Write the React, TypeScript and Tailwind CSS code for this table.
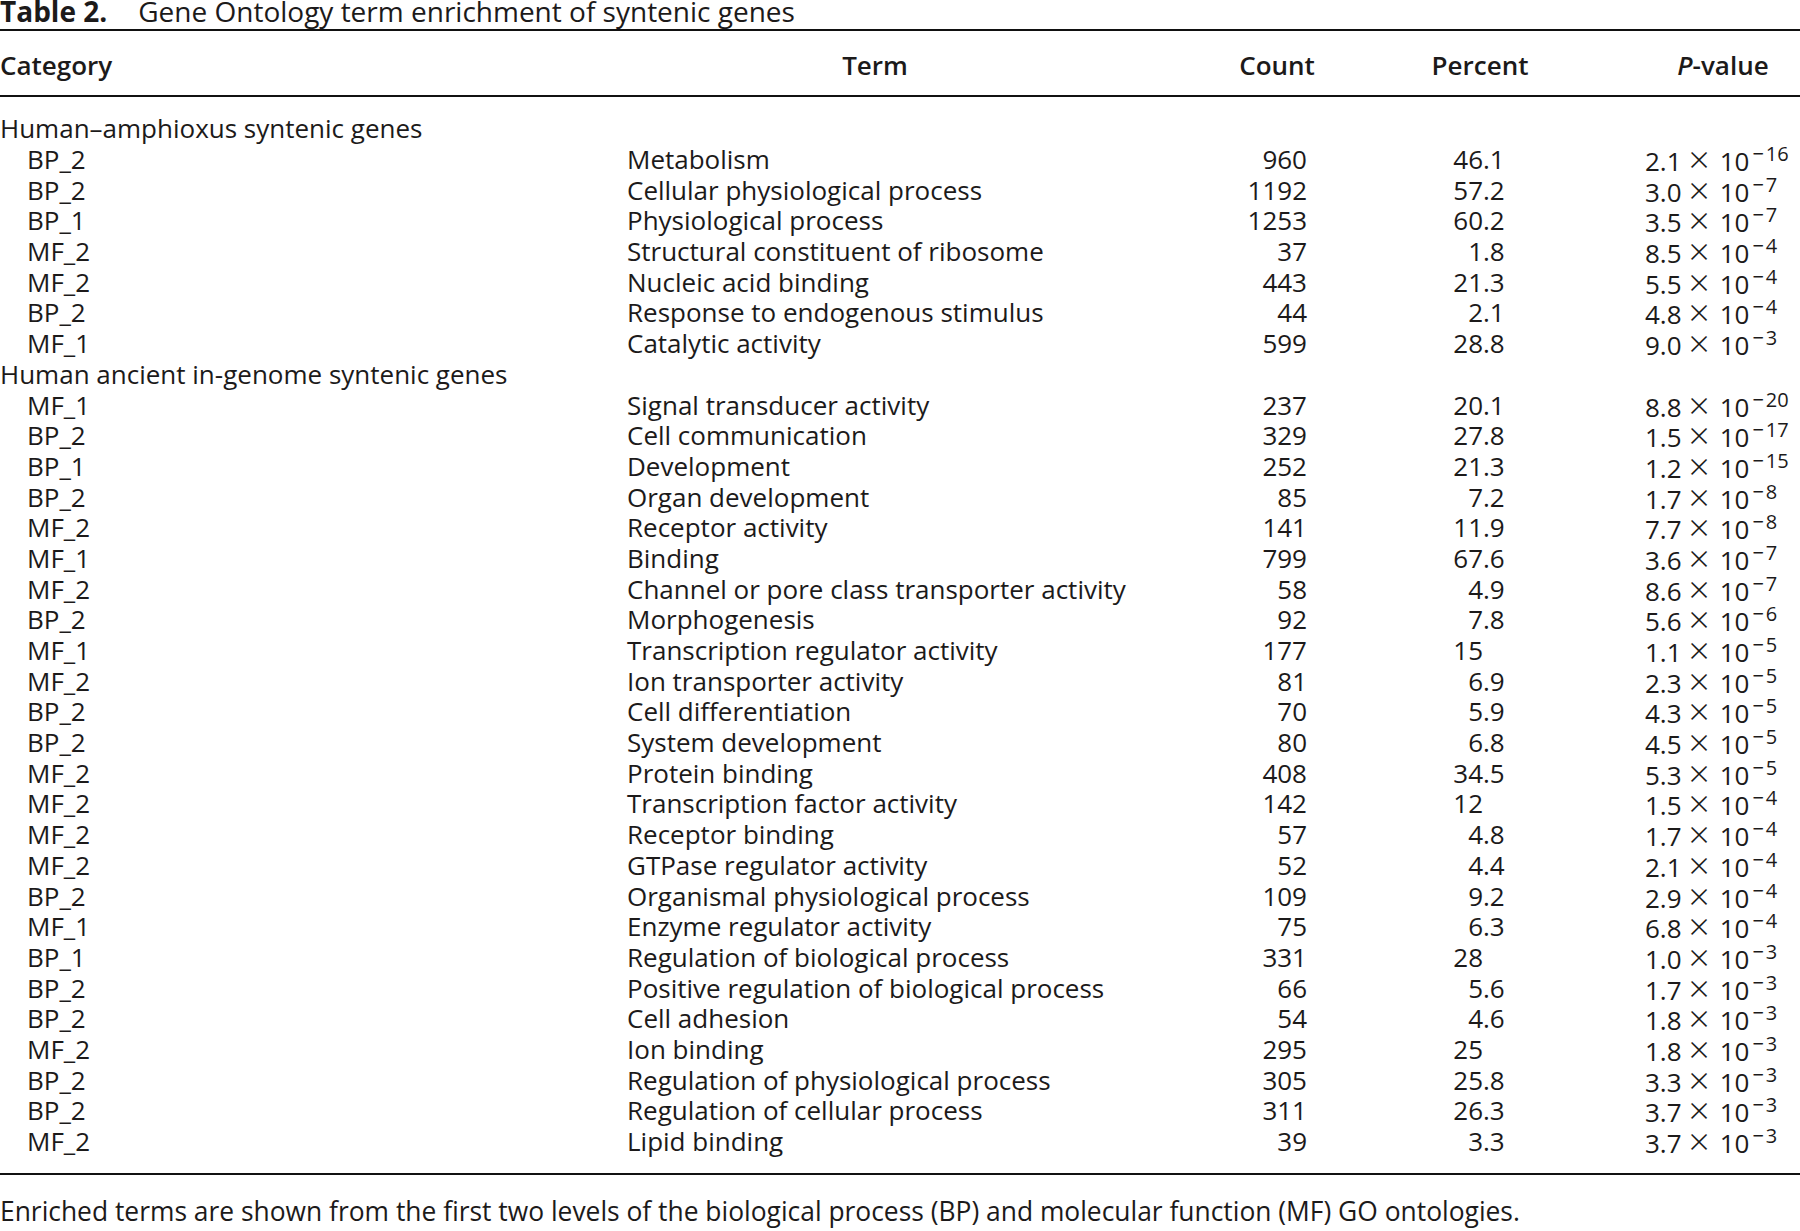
import React from "react";

type Item = [string, string, number, string, string, number];

const groups: { title: string; rows: Item[] }[] = [
  {
    title: "Human–amphioxus syntenic genes",
    rows: [
      ["BP_2", "Metabolism", 960, "46.1", "2.1", 16],
      ["BP_2", "Cellular physiological process", 1192, "57.2", "3.0", 7],
      ["BP_1", "Physiological process", 1253, "60.2", "3.5", 7],
      ["MF_2", "Structural constituent of ribosome", 37, "1.8", "8.5", 4],
      ["MF_2", "Nucleic acid binding", 443, "21.3", "5.5", 4],
      ["BP_2", "Response to endogenous stimulus", 44, "2.1", "4.8", 4],
      ["MF_1", "Catalytic activity", 599, "28.8", "9.0", 3],
    ],
  },
  {
    title: "Human ancient in-genome syntenic genes",
    rows: [
      ["MF_1", "Signal transducer activity", 237, "20.1", "8.8", 20],
      ["BP_2", "Cell communication", 329, "27.8", "1.5", 17],
      ["BP_1", "Development", 252, "21.3", "1.2", 15],
      ["BP_2", "Organ development", 85, "7.2", "1.7", 8],
      ["MF_2", "Receptor activity", 141, "11.9", "7.7", 8],
      ["MF_1", "Binding", 799, "67.6", "3.6", 7],
      ["MF_2", "Channel or pore class transporter activity", 58, "4.9", "8.6", 7],
      ["BP_2", "Morphogenesis", 92, "7.8", "5.6", 6],
      ["MF_1", "Transcription regulator activity", 177, "15", "1.1", 5],
      ["MF_2", "Ion transporter activity", 81, "6.9", "2.3", 5],
      ["BP_2", "Cell differentiation", 70, "5.9", "4.3", 5],
      ["BP_2", "System development", 80, "6.8", "4.5", 5],
      ["MF_2", "Protein binding", 408, "34.5", "5.3", 5],
      ["MF_2", "Transcription factor activity", 142, "12", "1.5", 4],
      ["MF_2", "Receptor binding", 57, "4.8", "1.7", 4],
      ["MF_2", "GTPase regulator activity", 52, "4.4", "2.1", 4],
      ["BP_2", "Organismal physiological process", 109, "9.2", "2.9", 4],
      ["MF_1", "Enzyme regulator activity", 75, "6.3", "6.8", 4],
      ["BP_1", "Regulation of biological process", 331, "28", "1.0", 3],
      ["BP_2", "Positive regulation of biological process", 66, "5.6", "1.7", 3],
      ["BP_2", "Cell adhesion", 54, "4.6", "1.8", 3],
      ["MF_2", "Ion binding", 295, "25", "1.8", 3],
      ["BP_2", "Regulation of physiological process", 305, "25.8", "3.3", 3],
      ["BP_2", "Regulation of cellular process", 311, "26.3", "3.7", 3],
      ["MF_2", "Lipid binding", 39, "3.3", "3.7", 3],
    ],
  },
];

// percent is aligned on the decimal point
const Percent = ({ v }: { v: string }) => {
  const [whole, frac] = v.split(".");
  return (
    <>
      <div className="w-[176px] text-right">{whole}</div>
      <div className="w-[162px]">{frac !== undefined ? "." + frac : ""}</div>
    </>
  );
};

const DataRow = ({ row }: { row: Item }) => {
  const [cat, term, count, pct, mant, exp] = row;
  return (
    <div className="flex h-[30.7px] items-center whitespace-nowrap">
      <div className="w-[627px] pl-[27px]">{cat}</div>
      <div className="w-[520px]">{term}</div>
      <div className="w-[160px] text-right">{count}</div>
      <Percent v={pct} />
      <div className="flex items-baseline">
        <span>{mant}</span>
        <span className="relative top-[2px] pl-[7px] pr-[10px] text-[37px] leading-none font-light">×</span>
        <span>10</span>
        <span className="ml-[3px] relative -top-[10px] text-[20px] leading-none">
          −<span className="ml-[2px]">{exp}</span>
        </span>
      </div>
    </div>
  );
};

export default function App() {
  return (
    <div
      className="min-h-screen w-[1800px] bg-white text-[26px] text-[#1c1a1a]"
      style={{ fontFamily: "'Open Sans', 'Noto Sans', sans-serif" }}
    >
      <div className="flex h-[29px] items-start text-[28px] leading-[22px] whitespace-nowrap">
        <span className="font-bold">Table 2.</span>
        <span className="ml-[31px]">Gene Ontology term enrichment of syntenic genes</span>
      </div>

      <div className="border-t-2 border-[#111]" />

      {/* header */}
      <div className="flex pt-[19px] pb-[15px] leading-[30px] font-semibold whitespace-nowrap">
        <div className="w-[627px]">Category</div>
        <div className="w-[496px] text-center">Term</div>
        <div className="w-[308px] text-center">Count</div>
        <div className="w-[98px] text-center">Percent</div>
        <div className="ml-[117px] w-[154px] text-center">
          <i>P</i>-value
        </div>
      </div>

      <div className="border-t-2 border-[#111]" />

      <div className="pt-[16.5px] pb-[16.5px]">
        {groups.map((g) => (
          <div key={g.title}>
            <div className="flex h-[30.7px] items-center whitespace-nowrap">{g.title}</div>
            {g.rows.map((r, i) => (
              <DataRow key={i} row={r} />
            ))}
          </div>
        ))}
      </div>

      <div className="border-t-2 border-[#111]" />

      <div className="mt-[21px] text-[26.4px] leading-[30px] whitespace-nowrap">
        Enriched terms are shown from the first two levels of the biological process (BP) and molecular function
        (MF) GO ontologies.
      </div>
    </div>
  );
}
